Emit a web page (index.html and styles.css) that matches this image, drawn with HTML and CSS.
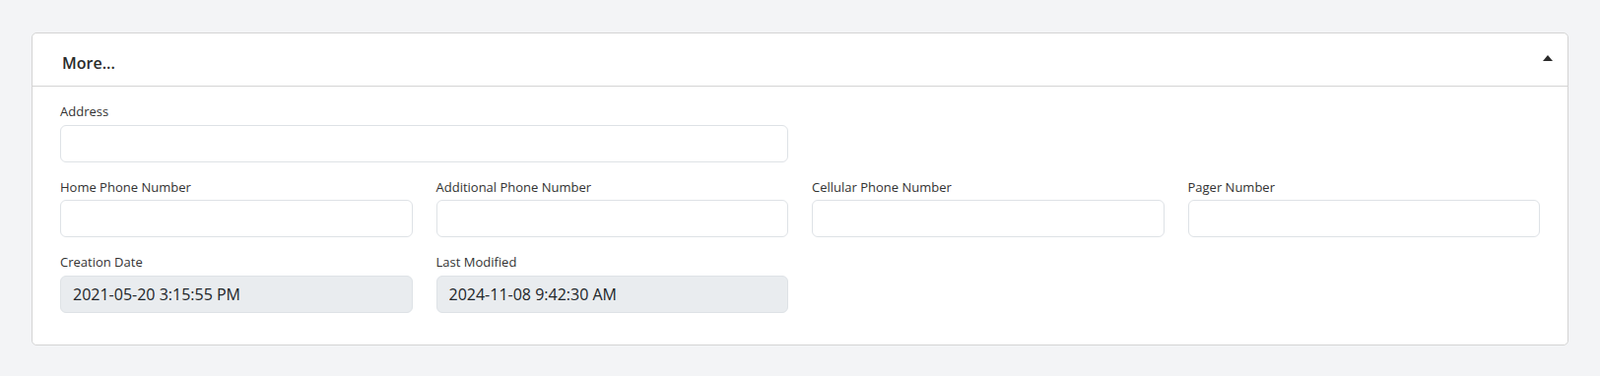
FILE: index.html
```html
<!DOCTYPE html>
<html lang="en">
<head>
<meta charset="utf-8">
<title>More</title>
<link rel="stylesheet" href="styles.css">
</head>
<body>
<div class="page">
  <section class="card">
    <header class="card-header">
      <h2 class="card-title">More...</h2>
      <svg class="caret" width="10" height="6" viewBox="0 0 10 6" aria-hidden="true"><path d="M5 0 L10 6 L0 6 Z" fill="#2b2b2b"/></svg>
    </header>
    <div class="card-body">
      <div class="form-grid">
        <div class="field span-2">
          <label class="field-label">Address</label>
          <input class="form-control" type="text">
        </div>
        <div class="field row-start">
          <label class="field-label">Home Phone Number</label>
          <input class="form-control" type="text">
        </div>
        <div class="field">
          <label class="field-label">Additional Phone Number</label>
          <input class="form-control" type="text">
        </div>
        <div class="field">
          <label class="field-label">Cellular Phone Number</label>
          <input class="form-control" type="text">
        </div>
        <div class="field">
          <label class="field-label">Pager Number</label>
          <input class="form-control" type="text">
        </div>
        <div class="field row-start">
          <label class="field-label">Creation Date</label>
          <input class="form-control readonly" type="text" value="2021-05-20 3:15:55 PM" readonly>
        </div>
        <div class="field">
          <label class="field-label">Last Modified</label>
          <input class="form-control readonly" type="text" value="2024-11-08 9:42:30 AM" readonly>
        </div>
      </div>
    </div>
  </section>
</div>
</body>
</html>
```

FILE: styles.css
```css
* { box-sizing: border-box; }

html, body {
  margin: 0;
  padding: 0;
  background: #f3f4f6;
  font-family: "Open Sans", "Liberation Sans", sans-serif;
  color: #333;
}

.page {
  padding: 33px 32px 0 32px;
}

.card {
  background: #fff;
  border: 1px solid #d4d4d4;
  border-radius: 5px;
}

.card-header {
  display: flex;
  justify-content: space-between;
  align-items: flex-start;
  padding: 17.5px 15px 11.5px 30px;
  border-bottom: 1px solid #d4d4d4;
}

.card-title {
  margin: 0;
  font-size: 16px;
  font-weight: 600;
  line-height: 24px;
  color: #2b2b2b;
}

.caret {
  display: block;
  margin-top: 4.5px;
}

.card-body {
  padding: 16px 28px 32px 28px;
}

.form-grid {
  display: grid;
  grid-template-columns: repeat(4, 1fr);
  column-gap: 24px;
  row-gap: 16px;
}

.span-2 { grid-column: span 2; }
.row-start { grid-column-start: 1; }

.field-label {
  display: block;
  font-size: 13px;
  line-height: 19.5px;
  margin-bottom: 3px;
  color: #333;
}

.form-control {
  display: block;
  width: 100%;
  height: 38px;
  padding: 6px 12px;
  font-family: "Open Sans", "Liberation Sans", sans-serif;
  font-size: 16px;
  line-height: 24px;
  color: #212529;
  background: #fff;
  border: 1px solid #dee2e6;
  border-radius: 6px;
  outline: none;
}

.form-control.readonly {
  background: #e9ecef;
}
```
